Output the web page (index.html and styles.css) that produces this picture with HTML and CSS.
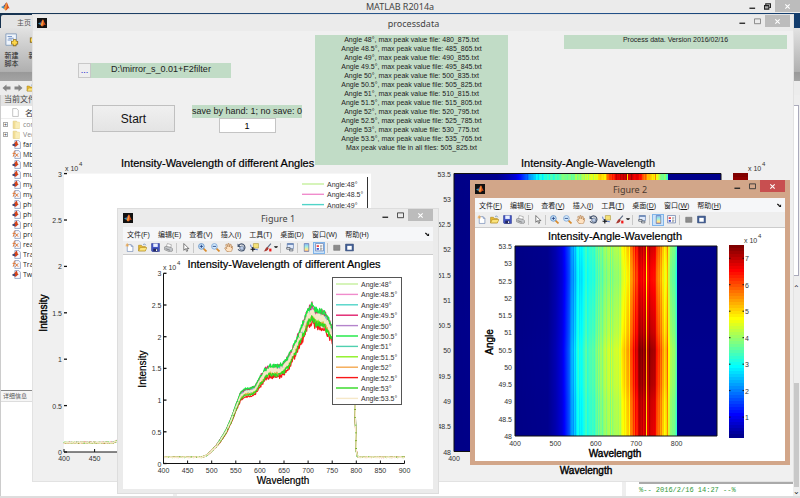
FILE: index.html
```html
<!DOCTYPE html>
<html lang="zh-CN">
<head>
<meta charset="utf-8">
<title>MATLAB R2014a</title>
<link rel="stylesheet" href="styles.css">
</head>
<body>
<svg class="defs" aria-hidden="true">
  <symbol id="logo" viewBox="0 0 16 16"><path d="M0 9l4-2 3 2-2 3z" fill="#3a8fb8"/><path d="M4 7c3-1 4-6 6-6L7 9z" fill="#5b4a7c"/><path d="M10 1c2 1 3 8 6 11-2-1-3-1-4 0-1 1-2 3-4 3-1-2-2-3-3-3 2-2 3-11 5-11z" fill="#d8501c"/><path d="M10 1c1 3 1 8-2 14-1-2-2-3-3-3 2-2 3-9 5-11z" fill="#f39a3c"/></symbol>
  <symbol id="new" viewBox="0 0 16 16"><path d="M4 3h7l3 3v9H4z" fill="#fff" stroke="#5672a8"/><path d="M11 3v3h3" fill="none" stroke="#5672a8"/><path d="M4 0v7M1 4h6M2 2l4 4M6 2L2 6" stroke="#f0a23c"/></symbol>
  <symbol id="open" viewBox="0 0 16 16"><path d="M1 4h5l1 2h6v8H1z" fill="#e8b92f" stroke="#a98318"/><path d="M4 8h12l-3 6H1z" fill="#fbe37c" stroke="#b08a1c"/><path d="M9 3c2-2 4-1 5 1" fill="none" stroke="#3465a4"/></symbol>
  <symbol id="save" viewBox="0 0 16 16"><path d="M1 1h14v14H2l-1-1z" fill="#4355c4" stroke="#27348c"/><path d="M4 1h8v6H4z" fill="#e9efff"/><path d="M4 10h8v5H4z" fill="#23285c"/><path d="M9 11h2v3H9z" fill="#fff"/></symbol>
  <symbol id="print" viewBox="0 0 16 16"><path d="M4 7l2-6 7 2-1 5z" fill="#fff" stroke="#888"/><path d="M1 7l3-1 9 2 2 2v4l-4 2-10-4z" fill="#c5c8cc" stroke="#777"/><path d="M3 10l8 3" stroke="#555"/></symbol>
  <symbol id="arrow" viewBox="0 0 16 16"><path d="M5 1v12l3-3 2 5 2-1-2-4h4z" fill="#fff" stroke="#222"/></symbol>
  <symbol id="zin" viewBox="0 0 16 16"><path d="M9 9l6 6" stroke="#d88b2c" stroke-width="3"/><circle cx="6" cy="6" r="5" fill="#d5ecff" stroke="#5b8cc4" stroke-width="1.5"/><path d="M6 3v6M3 6h6" stroke="#1c3e80" stroke-width="1.5"/></symbol>
  <symbol id="zout" viewBox="0 0 16 16"><path d="M9 9l6 6" stroke="#d88b2c" stroke-width="3"/><circle cx="6" cy="6" r="5" fill="#d5ecff" stroke="#7fa6d4" stroke-width="1.5"/><path d="M3 6h6" stroke="#1c3e80" stroke-width="1.5"/></symbol>
  <symbol id="hand" viewBox="0 0 16 16"><path d="M5 15L1 9l1-1 3 2-2-7 2-1 2 5V1h2l1 6 1-5 2 1v6l1-3 2 1-2 6-2 3z" fill="#ffe3c2" stroke="#a8713c"/></symbol>
  <symbol id="rotate" viewBox="0 0 16 16"><path d="M3 4c5-5 12-1 11 5-1 6-9 7-12 2" fill="none" stroke="#43536e" stroke-width="2"/><path d="M1 1v6h6z" fill="#43536e"/><path d="M5 7l4-2 3 2v4l-3 2-4-2z" fill="#b9cae6" stroke="#43536e"/></symbol>
  <symbol id="cursor" viewBox="0 0 16 16"><path d="M6 1h9v8H6z" fill="#f5e27a" stroke="#a88f2c"/><path d="M1 3c1 6 3 8 13 9" fill="none" stroke="#3b63c4" stroke-width="1.5"/><path d="M5 7v8M1 11h8" stroke="#111" stroke-width="2"/></symbol>
  <symbol id="brush" viewBox="0 0 16 16"><path d="M14 1L7 9" stroke="#5b6b84" stroke-width="2"/><path d="M8 7l2 2c-1 5-5 6-9 6 3-2 3-7 7-8z" fill="#a83a32"/><path d="M11 10h4v5h-4z" fill="#f01818"/></symbol>
  <symbol id="link" viewBox="0 0 16 16"><path d="M4 1h11v9H4z" fill="#dfeafc" stroke="#4b6ca4"/><path d="M4 2h11" stroke="#4b6ca4" stroke-width="2"/><path d="M3 8h6v3H3zM8 11h6v3H8z" fill="#fff" stroke="#5c6470" stroke-width="1.5"/></symbol>
  <symbol id="cbar" viewBox="0 0 16 16"><path d="M4 1h8v14H4z" fill="url(#rainbow)" stroke="#4660a0"/></symbol>
  <symbol id="legend" viewBox="0 0 16 16"><path d="M1 1h14v13H1z" fill="#fff" stroke="#3e5a94"/><path d="M3 4h4v3H3z" fill="#e33"/><path d="M3 9h4v3H3z" fill="#34c"/><path d="M9 5h4M9 7h3M9 10h4M9 12h3" stroke="#555"/></symbol>
  <symbol id="hide" viewBox="0 0 16 16"><path d="M3 4h11v9H3z" fill="#8c8c8c" stroke="#707070"/></symbol>
  <symbol id="dock" viewBox="0 0 16 16"><path d="M1 2h14v12H1z" fill="#3f5c94" stroke="#2d4370"/><path d="M4 5h8v7H4z" fill="#fff"/></symbol>
  <symbol id="mfile" viewBox="0 0 16 16"><path d="M5 1h7l3 3v11H5z" fill="#f4f7ff" stroke="#6478a8"/><path d="M0 9l4-3 4-5c2 3 2 7 4 8-3-1-4 3-6 3z" fill="#d3421c"/><path d="M0 9l4-3 2 3-2 2z" fill="#2c4c8c"/></symbol>
  <symbol id="fx" viewBox="0 0 16 16"><path d="M5 1h7l3 3v11H5z" fill="#f4f7ff" stroke="#6478a8"/><path d="M6 2C3 0 4 8 2 12M1 6h5M6 6l5 6M11 6l-5 6" fill="none" stroke="#e0702c" stroke-width="1.6"/></symbol>
  <symbol id="folder" viewBox="0 0 16 16"><path d="M2 2h6l1 2h4v11H2z" fill="#f2dd94" stroke="#dcc678"/><path d="M6 4h8v11H6z" fill="#f9edb8"/></symbol>
  <symbol id="script" viewBox="0 0 16 16"><path d="M1 1h12v13H1z" fill="#eef4fb" stroke="#8099b8"/><path d="M3 4h5M4 6h6M3 8h5" stroke="#6c8cc0"/><path d="M11 7v8M7 11h8" stroke="#8a6a1c" stroke-width="4"/><path d="M11 8v6M8 11h6" stroke="#ffd84a" stroke-width="2.5"/></symbol>
  <symbol id="plus" viewBox="0 0 16 16"><path d="M8 1v14M1 8h14" stroke="#8a6a1c" stroke-width="6"/><path d="M8 2v12M2 8h12" stroke="#ffdc58" stroke-width="4"/></symbol>
  <symbol id="back" viewBox="0 0 16 16"><path d="M0 8l8-7v4h8v6H8v4z" fill="#858585"/></symbol>
  <symbol id="fwd" viewBox="0 0 16 16"><path d="M16 8L8 1v4H0v6h8v4z" fill="#858585"/></symbol>
  <symbol id="doc" viewBox="0 0 16 16"><path d="M3 1h7l3 3v11H3z" fill="#fff" stroke="#999"/></symbol>
  <symbol id="min" viewBox="0 0 16 16"><path d="M1 12h13" stroke="#222" stroke-width="3"/></symbol>
  <symbol id="max" viewBox="0 0 16 16"><path d="M1 2h14v11H1z" fill="none" stroke="#333" stroke-width="2"/></symbol>
  <symbol id="restore" viewBox="0 0 16 16"><path d="M4 5V2h11v8h-3" fill="none" stroke="#222" stroke-width="2.5"/><path d="M1 6h10v8H1z" fill="#aaa" stroke="#222" stroke-width="2.5"/></symbol>
  <symbol id="close" viewBox="0 0 16 16"><path d="M3 3l10 10M13 3L3 13" stroke="#fff" stroke-width="2.5"/></symbol>
  <symbol id="undock" viewBox="0 0 16 16"><path d="M1 3l7 6" stroke="#111" stroke-width="4"/><path d="M13 4v9H5z" fill="#111"/></symbol>
  <linearGradient id="rainbow" x1="0" y1="0" x2="0" y2="1"><stop offset="0" stop-color="#8fb4f4"/><stop offset=".4" stop-color="#9ff0e4"/><stop offset=".75" stop-color="#ffe98a"/><stop offset="1" stop-color="#f4a07c"/></linearGradient>
</svg>

<div class="desktop">
  <main class="matlab">
    <header class="bar app-bar">
      <svg class="app-logo"><use href="#logo"/></svg>
      <h1 class="bar-title">MATLAB R2014a</h1>
      <div class="controls">
        <button aria-label="最小化"><svg><use href="#min"/></svg></button>
        <button aria-label="还原"><svg><use href="#restore"/></svg></button>
        <button class="close" aria-label="关闭"><svg><use href="#close"/></svg></button>
      </div>
    </header>
    <nav class="tabs"><button class="tab">主页</button></nav>
    <div class="strip">
      <button><svg><use href="#script"/></svg><span>新建<br>脚本</span></button>
      <button><svg><use href="#plus"/></svg><span>新建</span></button>
    </div>
    <div class="path">
      <svg><use href="#back"/></svg><svg><use href="#fwd"/></svg><svg><use href="#open"/></svg>
    </div>
    <div class="panes">
      <section class="side">
        <h2 class="pane-title">当前文件夹</h2>
        <div class="list-head"><svg><use href="#doc"/></svg>名称</div>
        <ul class="files">
          <li class="dir"><i>+</i><svg><use href="#folder"/></svg>con</li>
          <li class="dir"><i>+</i><svg><use href="#folder"/></svg>Vec</li>
          <li><svg><use href="#mfile"/></svg>fara</li>
          <li><svg><use href="#fx"/></svg>Mb</li>
          <li><svg><use href="#mfile"/></svg>Mb</li>
          <li><svg><use href="#mfile"/></svg>mul</li>
          <li><svg><use href="#mfile"/></svg>mya</li>
          <li><svg><use href="#fx"/></svg>mya</li>
          <li><svg><use href="#mfile"/></svg>pho</li>
          <li><svg><use href="#mfile"/></svg>pho</li>
          <li><svg><use href="#mfile"/></svg>pro</li>
          <li><svg><use href="#fx"/></svg>pro</li>
          <li><svg><use href="#fx"/></svg>rea</li>
          <li><svg><use href="#mfile"/></svg>Tra</li>
          <li><svg><use href="#fx"/></svg>Tra</li>
          <li><svg><use href="#mfile"/></svg>Two</li>
        </ul>
        <h2 class="detail-title">详细信息</h2>
        <div class="detail"></div>
      </section>
      <section class="command"></section>
      <section class="right">
        <div class="workspace"></div>
        <div class="history">
          <div class="history-text">
            <p class="selected">processdata</p>
            <p>%-- 2016/2/16 14:27 --%</p>
          </div>
          <div class="scroll"><span>⌃</span><b></b><span>⌄</span></div>
        </div>
      </section>
    </div>
  </main>

  <section class="window gui">
    <header class="bar">
      <span class="win-logo"><svg><use href="#logo"/></svg></span>
      <h2 class="bar-title">processdata</h2>
      <div class="controls">
        <button aria-label="最小化"><svg><use href="#min"/></svg></button>
        <button class="dim" aria-label="最大化"><svg><use href="#max"/></svg></button>
        <button class="close" aria-label="关闭"><svg><use href="#close"/></svg></button>
      </div>
    </header>
    <div class="gui-top">
      <div class="form">
        <div class="file-row"><button class="browse">...</button><p class="field">D:\mirror_s_0.01+F2filter</p></div>
        <div class="run-row">
          <button class="start">Start</button>
          <div class="save">
            <label class="field" for="save">save by hand: 1; no save: 0</label>
            <input id="save" value="1">
          </div>
        </div>
        <h3 class="plot-title">Intensity-Wavelength of different Angles</h3>
      </div>
      <div class="log">
        <p>Angle 48°, max peak value file: 480_875.txt</p>
        <p>Angle 48.5°, max peak value file: 485_865.txt</p>
        <p>Angle 49°, max peak value file: 490_855.txt</p>
        <p>Angle 49.5°, max peak value file: 495_845.txt</p>
        <p>Angle 50°, max peak value file: 500_835.txt</p>
        <p>Angle 50.5°, max peak value file: 505_825.txt</p>
        <p>Angle 51°, max peak value file: 510_815.txt</p>
        <p>Angle 51.5°, max peak value file: 515_805.txt</p>
        <p>Angle 52°, max peak value file: 520_795.txt</p>
        <p>Angle 52.5°, max peak value file: 525_785.txt</p>
        <p>Angle 53°, max peak value file: 530_775.txt</p>
        <p>Angle 53.5°, max peak value file: 535_765.txt</p>
        <p>Max peak value file in all files: 505_825.txt</p>
      </div>
      <div class="about">
        <p class="version">Process data. Version 2016/02/16</p>
        <h3 class="plot-title">Intensity-Angle-Wavelength</h3>
      </div>
    </div>
    <svg class="plot" id="plot-gui" viewBox="33 165 760 316"></svg>
  </section>

  <section class="window figure one">
    <header class="bar">
      <span class="win-logo"><svg><use href="#logo"/></svg></span>
      <h2 class="bar-title">Figure 1</h2>
      <div class="controls">
        <button aria-label="最小化"><svg><use href="#min"/></svg></button>
        <button aria-label="最大化"><svg><use href="#max"/></svg></button>
        <button class="close" aria-label="关闭"><svg><use href="#close"/></svg></button>
      </div>
    </header>
    <nav class="menu">
      <button>文件(F)</button><button>编辑(E)</button><button>查看(V)</button><button>插入(I)</button><button>工具(T)</button><button>桌面(D)</button><button>窗口(W)</button><button>帮助(H)</button>
      <svg class="undock"><use href="#undock"/></svg>
    </nav>
    <div class="tools">
      <button aria-label="新建"><svg><use href="#new"/></svg></button><button aria-label="打开"><svg><use href="#open"/></svg></button><button aria-label="保存"><svg><use href="#save"/></svg></button><button aria-label="打印"><svg><use href="#print"/></svg></button><hr>
      <button aria-label="选择"><svg><use href="#arrow"/></svg></button><hr>
      <button aria-label="放大"><svg><use href="#zin"/></svg></button><button aria-label="缩小"><svg><use href="#zout"/></svg></button><button aria-label="平移"><svg><use href="#hand"/></svg></button><button aria-label="旋转"><svg><use href="#rotate"/></svg></button><button aria-label="数据游标"><svg><use href="#cursor"/></svg></button><button aria-label="刷亮"><svg><use href="#brush"/></svg></button><span class="caret"></span><hr>
      <button aria-label="链接"><svg><use href="#link"/></svg></button><hr>
      <button aria-label="颜色栏"><svg><use href="#cbar"/></svg></button><button class="on" aria-label="图例"><svg><use href="#legend"/></svg></button><hr>
      <button aria-label="隐藏绘图工具"><svg><use href="#hide"/></svg></button><button aria-label="显示绘图工具"><svg><use href="#dock"/></svg></button>
    </div>
    <svg class="plot" id="plot-one" viewBox="123 255 310 234"></svg>
  </section>

  <section class="window figure two">
    <header class="bar">
      <span class="win-logo"><svg><use href="#logo"/></svg></span>
      <h2 class="bar-title">Figure 2</h2>
      <div class="controls">
        <button aria-label="最小化"><svg><use href="#min"/></svg></button>
        <button aria-label="最大化"><svg><use href="#max"/></svg></button>
        <button class="close" aria-label="关闭"><svg><use href="#close"/></svg></button>
      </div>
    </header>
    <nav class="menu">
      <button>文件(<u>F</u>)</button><button>编辑(<u>E</u>)</button><button>查看(<u>V</u>)</button><button>插入(<u>I</u>)</button><button>工具(<u>T</u>)</button><button>桌面(<u>D</u>)</button><button>窗口(<u>W</u>)</button><button>帮助(<u>H</u>)</button>
      <svg class="undock"><use href="#undock"/></svg>
    </nav>
    <div class="tools">
      <button aria-label="新建"><svg><use href="#new"/></svg></button><button aria-label="打开"><svg><use href="#open"/></svg></button><button aria-label="保存"><svg><use href="#save"/></svg></button><button aria-label="打印"><svg><use href="#print"/></svg></button><hr>
      <button aria-label="选择"><svg><use href="#arrow"/></svg></button><hr>
      <button aria-label="放大"><svg><use href="#zin"/></svg></button><button aria-label="缩小"><svg><use href="#zout"/></svg></button><button aria-label="平移"><svg><use href="#hand"/></svg></button><button aria-label="旋转"><svg><use href="#rotate"/></svg></button><button aria-label="数据游标"><svg><use href="#cursor"/></svg></button><button aria-label="刷亮"><svg><use href="#brush"/></svg></button><span class="caret"></span><hr>
      <button aria-label="链接"><svg><use href="#link"/></svg></button><hr>
      <button class="on" aria-label="颜色栏"><svg><use href="#cbar"/></svg></button><button aria-label="图例"><svg><use href="#legend"/></svg></button><hr>
      <button aria-label="隐藏绘图工具"><svg><use href="#hide"/></svg></button><button aria-label="显示绘图工具"><svg><use href="#dock"/></svg></button>
    </div>
    <svg class="plot" id="plot-two" viewBox="475 228 310 233"></svg>
  </section>
</div>
<script src="script.js"></script>
</body>
</html>
```

FILE: styles.css
```css
* { box-sizing: border-box; }
body, h1, h2, h3, p, ul, hr { margin: 0; padding: 0; font-weight: normal; }
body { font-family: "Liberation Sans", "Noto Sans CJK SC", sans-serif; font-size: 8px; color: #222; }
button { border: 0; padding: 0; margin: 0; background: none; font: inherit; color: inherit; }
ul { list-style: none; }
.defs { position: absolute; width: 0; height: 0; }

.desktop { position: relative; height: 100vh; overflow: hidden; background: #eee; }

/* title bars */
.bar { display: grid; grid-template-columns: 1fr auto 1fr; align-items: center; height: 16px; flex: none; }
.bar-title { font: 9px "Noto Sans", "Open Sans", sans-serif; color: #444; }
.controls { display: flex; justify-self: end; align-self: start; align-items: center; gap: 8px; }
.controls button { width: 7px; height: 12px; display: flex; align-items: center; justify-content: center; }
.controls svg { width: 7px; height: 7px; }
.controls .close { width: 25px; background: #bcbcbc; margin-left: -4px; }
.controls .dim { opacity: .6; }
.app-logo { width: 9px; height: 9px; margin-left: 1px; }
.win-logo { width: 10px; height: 10px; display: flex; align-items: center; justify-content: center; background: #111; }
.win-logo svg { width: 8px; height: 8px; }

/* main window */
.matlab { display: flex; flex-direction: column; height: 100%; }
.app-bar { height: 13px; background: #ebebeb; }
.tabs { height: 15px; flex: none; padding: 2px 0 0 1px; background: linear-gradient(90deg, #16324f, #2c5f9c 60%, #123c6c); }
.tab { width: 46px; height: 13px; background: #e4e4e4; color: #555; font-size: 7px; border-radius: 2px 0 0; }
.strip { display: flex; gap: 9px; height: 53px; flex: none; padding: 5px 4px; background: linear-gradient(#e2e2e2, #b0b0b0 82%, #999 84%, #a4a4a4); }
.strip button { display: flex; flex-direction: column; align-items: center; width: 15px; font-size: 7px; line-height: 8px; white-space: nowrap; }
.strip svg { width: 14px; height: 14px; margin-bottom: 5px; flex: none; }
.path { display: flex; align-items: center; gap: 3px; height: 14px; flex: none; padding-left: 2px; background: #ececec; }
.path svg { width: 9px; height: 8px; }
.panes { flex: 1; display: grid; grid-template-columns: 173px 1fr 174px; gap: 4px; min-height: 0; border-bottom: 2px solid #ddd; }
.side { display: flex; flex-direction: column; border-left: 1px solid #ccc; background: #fff; }
.pane-title { height: 11px; flex: none; padding-left: 3px; font-size: 8px; line-height: 10px; background: #e4e4e4; color: #444; }
.list-head { display: flex; align-items: center; gap: 5px; height: 13px; flex: none; padding-left: 10px; color: #333; border-bottom: 1px solid #eee; }
.list-head svg { width: 9px; height: 9px; }
.files { flex: 1; }
.files li { display: flex; align-items: center; gap: 2px; height: 10px; padding-left: 11px; font: 7px "Open Sans", sans-serif; }
.files svg { width: 9px; height: 9px; }
.files .dir { padding-left: 2px; color: #888; }
.files i { width: 5px; height: 5px; margin-right: 2px; border: 1px solid #aaa; font: 5px "Liberation Sans", sans-serif; line-height: 3px; text-align: center; color: #333; }
.detail-title { height: 12px; flex: none; padding-left: 2px; border-top: 1px solid #888; border-bottom: 1px solid #ddd; font-size: 6px; line-height: 11px; background: #f6f6f6; color: #555; }
.detail { height: 94px; flex: none; }
.command { background: #fff; }
.right { display: flex; flex-direction: column; gap: 8px; background: #eee; }
.workspace { height: 171px; flex: none; margin: 10px 1px 0 0; background: #fff; border: 1px solid #aab; }
.history { flex: 1; display: flex; background: #fff; }
.history-text { flex: 1; display: flex; flex-direction: column; justify-content: flex-end; font: 7px "Liberation Mono", monospace; line-height: 12px; color: #2f9a3a; padding-left: 13px; white-space: nowrap; }
.history-text .selected { height: 9px; line-height: 6px; background: #aaa; color: #444; }
.scroll { width: 7px; display: flex; flex-direction: column; align-items: center; background: #eee; line-height: 9px; }
.scroll span:first-child { flex: 1; }
.scroll b { width: 5px; height: 104px; background: #c8c8c8; }

/* windows lying on the desktop */
.window { position: absolute; display: flex; flex-direction: column; }
.plot { display: block; width: 100%; overflow: visible; }
.gui { left: 33px; right: 7px; top: 15px; background: #f0f0f0; box-shadow: 0 0 0 1px #e2e2e2; }
.gui .bar { padding: 0 3px 0 4px; background: #ebebeb; }
.gui-top { display: grid; grid-template-columns: 282px 193px 1fr; height: 134px; padding-top: 4px; }
.form { display: flex; flex-direction: column; align-items: flex-start; padding: 28px 0 0 45px; }
.file-row { display: flex; width: 153px; height: 15px; }
.browse { width: 13px; border: 1px solid #c8c8c8; background: #eee; color: #11c; font-size: 9px; line-height: 9px; }
.field { background: #c1dcc6; font-size: 9px; line-height: 12px; text-align: center; white-space: nowrap; }
.file-row .field { flex: 1; }
.run-row { display: flex; gap: 17px; padding-left: 14px; margin-top: 27px; }
.start { width: 83px; height: 27px; border: 1px solid #c0c0c0; background: linear-gradient(#f0f0f0, #e4e4e4); font-size: 12px; color: #111; }
.save { display: flex; flex-direction: column; align-items: center; width: 110px; }
.save .field { width: 100%; height: 13px; }
.save input { width: 57px; height: 15px; border: 1px solid #c4c4c4; padding: 0; text-align: center; background: #fff; font: 9px "Liberation Sans", sans-serif; }
.plot-title { margin-top: auto; margin-bottom: -4px; font-size: 11px; line-height: 12px; color: #000; -webkit-text-stroke: .2px #000; white-space: nowrap; }
.form .plot-title { padding-left: 43px; }
.log { height: 130px; background: #c1dcc6; font-size: 7px; line-height: 9px; text-align: center; }
.about { display: flex; flex-direction: column; padding: 0 6px 0 13px; }
.version { height: 14px; margin-left: 43px; background: #c1dcc6; font-size: 7px; line-height: 9px; text-align: center; }

.figure { width: 40%; padding: 0 5px 4px; background: #ebebeb; box-shadow: 0 0 0 1px #ddd; }
.figure .bar { height: 18px; }
.figure .plot { background: #fff; }
.one { left: 118px; top: 209px; }
.two { left: 470px; top: 180px; background: #d2a689; box-shadow: none; }
.two .close { background: #c84f50; }
.two .bar-title { color: #4a3a30; }
.menu { display: flex; align-items: center; gap: 8px; height: 14px; padding: 0 3px 0 4px; background: #f6f7f9; font-size: 7px; white-space: nowrap; }
.undock { width: 5px; height: 5px; margin-left: auto; }
.tools { display: flex; align-items: center; gap: 1px; height: 14px; background: #eee; border-bottom: 1px solid #ccc; }
.tools button { width: 12px; height: 12px; display: flex; align-items: center; justify-content: center; }
.tools svg { width: 9px; height: 9px; }
.tools .on { background: #cbe3fa; border: 1px solid #7fb4ea; }
.tools hr { width: 1px; height: 10px; margin: 0 1px; border: 0; background: #c8c8c8; }
.caret { border: 1px solid transparent; border-top: 2px solid #444; width: 4px; }
.two .tools { height: 16px; }

/* plot text */
.tick { font-size: 7px; fill: #333; }
.axis-label { font-size: 10px; fill: #000; stroke: #000; stroke-width: .2px; text-anchor: middle; }
.axis-label.bold { stroke-width: .4px; }
.title { font-size: 11px; fill: #000; stroke: #000; stroke-width: .2px; text-anchor: middle; }
.exp { font-size: 6px; fill: #333; }
.end { text-anchor: end; }
.mid { text-anchor: middle; }
```

FILE: script.js
```js
const NS = 'http://www.w3.org/2000/svg';
let seed = 7;
const rand = () => (seed = (seed * 16807) % 2147483647) / 2147483647;

function add(parent, tag, attrs, text) {
  const el = document.createElementNS(NS, tag);
  for (const k in attrs) el.setAttribute(k, attrs[k]);
  if (text !== undefined) el.textContent = text;
  parent.appendChild(el);
  return el;
}

function interp(points, x) {
  for (let i = 1; i < points.length; i++) {
    const [x0, y0] = points[i - 1], [x1, y1] = points[i];
    if (x <= x1) return y0 + (y1 - y0) * (x - x0) / (x1 - x0);
  }
  return points[points.length - 1][1];
}

function jet(t) {
  const c = d => Math.round(255 * Math.max(0, Math.min(1, 1.5 - Math.abs(4 * t - d))));
  return `rgb(${c(3)},${c(2)},${c(1)})`;
}

const spectrum = [[400, .1], [480, .1], [490, .13], [500, .2], [510, .28], [520, .39], [530, .51], [540, .68], [550, .88], [560, 1.07], [570, 1.13], [580, 1.135], [590, 1.17], [600, 1.3], [610, 1.42], [620, 1.47], [640, 1.47], [650, 1.52], [660, 1.62], [670, 1.77], [680, 1.95], [690, 2.12], [700, 2.33], [708, 2.4], [715, 2.31], [732, 2.29], [740, 2.2], [750, 2.05], [790, 1.6], [797, 1], [800, .2], [802, .12], [805, .1], [900, .1]];

const series = [
  ['48', '#c4f09c', .99], ['48.5', '#f08ccc', 1.03], ['49', '#50d4c8', 1.02], ['49.5', '#e0206c', 1.04],
  ['50', '#b484cc', 1], ['50.5', '#18e840', 1.045], ['51', '#50d0b0', .98], ['51.5', '#8cf020', .97],
  ['52', '#f4a850', .965], ['52.5', '#f81818', .935], ['53', '#30d820', .955], ['53.5', '#f6e8c8', 1]
];

function exponent(svg, x, y) {
  add(svg, 'text', { x, y, class: 'tick' }, 'x 10');
  add(svg, 'text', { x: x + 14, y: y - 5, class: 'exp' }, '4');
}

function lineAxes(svg, x0, y0, sx, sy, fullWidth) {
  const X = v => x0 + (v - 400) * sx, Y = v => y0 - v * sy;
  add(svg, 'rect', { x: x0, y: Y(3), width: 500 * sx + 1, height: 3 * sy, fill: '#fff' });
  for (const [name, color, k] of series) {
    let d = '';
    const last = name === '53.5';
    for (let v = 400; v <= 900; v += last ? .5 : 1) {
      const b = interp(spectrum, v);
      const spread = b < .3 ? .05 : (v > 600 ? .025 : .012);
      const f = b < .3 ? 1 : k;
      d += `${d ? 'L' : 'M'}${X(v).toFixed(1)} ${Y(b * (f + (rand() * 2 - 1) * spread)).toFixed(1)}`;
    }
    add(svg, 'path', { d, fill: 'none', stroke: color, 'stroke-width': last ? 1.5 : 1.2, 'stroke-dasharray': last ? '7 .8' : 'none', 'stroke-linejoin': 'round' });
  }
  if (fullWidth) add(svg, 'path', { d: `M${x0} ${Y(3)}V${y0}`, stroke: '#111' });
  add(svg, 'path', { d: `M${x0} ${y0}H${X(900)}`, stroke: '#111' });
  for (let v = 0; v <= 3; v += .5) {
    add(svg, 'path', { d: `M${x0} ${Y(v)}h3`, stroke: '#111', 'stroke-width': 1.3 });
    add(svg, 'text', { x: x0 - 2, y: Y(v) + 3, class: 'tick end' }, v);
  }
  for (let v = 400; v <= (fullWidth ? 900 : 450); v += 50) {
    add(svg, 'path', { d: `M${X(v)} ${y0}v-3`, stroke: '#111' });
    add(svg, 'text', { x: X(v), y: y0 + 9, class: 'tick mid' }, v);
  }
}

function legend(svg, x, y, step, rows) {
  rows.forEach(([name, color], i) => {
    add(svg, 'path', { d: `M${x} ${y + i * step}h22`, stroke: color, 'stroke-width': 1.4 });
    add(svg, 'text', { x: x + 25, y: y + i * step + 3, class: 'tick' }, `Angle:${name}°`);
  });
}

const heat = [[400, .3], [480, .35], [500, .6], [515, .9], [530, 1.6], [540, 2.1], [550, 2.75], [560, 3.05], [580, 3.3], [600, 3.65], [620, 3.95], [640, 4.15], [660, 4.5], [670, 4.8], [680, 5.3], [690, 5.9], [700, 6.7], [712, 7.1], [735, 7], [745, 6.6], [755, 5.9], [765, 5.3], [775, 4.8], [785, 4.2], [799, 3.6]];
const gain = [[48, .98], [49, 1], [49.5, 1.03], [50.5, 1.05], [51, 1.01], [52, .97], [52.6, .94], [53.1, .97], [53.5, 1]];

function heatmap(svg, id, x, y, w, h) {
  const defs = add(svg, 'defs', {});
  const n = Math.round(w);
  for (let i = 0; i < n; i++) {
    const nm = 400 + 500 * i / n;
    let base = nm > 800 ? .33 : interp(heat, nm);
    if (nm > 535 && nm < 800) base += (rand() * 2 - 1) * .27;
    if (Math.abs(nm - 724) < 1.3) base = 5.1;
    if (Math.abs(nm - 776) < 1.3) base = 5.7;
    if (Math.abs(nm - 682) < 1.3) base = 4.9;
    const g = add(defs, 'linearGradient', { id: `${id}${i}`, x1: 0, x2: 0, y1: 0, y2: 1 });
    for (let s = 0; s <= 22; s++) {
      const v = base * interp(gain, 53.5 - s * .25);
      add(g, 'stop', { offset: s / 22, 'stop-color': jet((v - .25) / 7.25) });
    }
    add(svg, 'rect', { x: x + i * w / n, y, width: i < n - 1 ? 2 : 1, height: h, fill: `url(#${id}${i})`, 'shape-rendering': 'crispEdges' });
  }
  add(svg, 'path', { d: `M${x} ${y}H${x + w}V${y + h}H${x}z`, fill: 'none', stroke: '#111' });
  for (let i = 0; i <= 11; i++) {
    const ty = y + h * i / 11;
    add(svg, 'text', { x: x - 3, y: ty + 3, class: 'tick end' }, 53.5 - i * .5);
  }
}

function colorbar(svg, x, y, w, h) {
  for (let i = 0; i < 64; i++) {
    add(svg, 'rect', { x, y: y + h * i / 64, width: w, height: h / 64 + .5, fill: jet(1 - i / 64), 'shape-rendering': 'crispEdges' });
  }
  for (let v = 1; v <= 7; v++) {
    const ty = y + h * (7.5 - v) / 7.25;
    add(svg, 'path', { d: `M${x} ${ty}h1.5M${x + w - 1.5} ${ty}h1.5`, stroke: '#111' });
    add(svg, 'text', { x: x + w + 1, y: ty + 3, class: 'tick' }, v);
  }
}

const gui = document.getElementById('plot-gui');
lineAxes(gui, 64, 452, .612, 92.8, false);
exponent(gui, 65, 171);
legend(gui, 302, 184, 10.3, series.slice(0, 3));
add(gui, 'path', { d: 'M367.5 177V300', stroke: '#333' });
add(gui, 'text', { transform: 'translate(47 313) rotate(-90)', class: 'axis-label bold' }, 'Intensity');
heatmap(gui, 'a', 454, 173.5, 267, 278);
colorbar(gui, 733, 173, 15, 279);
exponent(gui, 748, 171);
add(gui, 'text', { x: 454, y: 461, class: 'tick mid' }, '400');
add(gui, 'text', { x: 586, y: 474, class: 'axis-label bold' }, 'Wavelength');

const one = document.getElementById('plot-one');
lineAxes(one, 163.5, 463.5, .482, 63.4, true);
exponent(one, 163, 270);
add(one, 'text', { x: 284, y: 268, class: 'title' }, 'Intensity-Wavelength of different Angles');
add(one, 'text', { x: 283, y: 484, class: 'axis-label' }, 'Wavelength');
add(one, 'text', { transform: 'translate(146 369) rotate(-90)', class: 'axis-label' }, 'Intensity');
add(one, 'rect', { x: 332.5, y: 277.5, width: 69, height: 127, fill: '#fff', stroke: '#555' });
legend(one, 336, 284, 10.4, series);

const two = document.getElementById('plot-two');
heatmap(two, 'b', 515, 246, 202, 190);
colorbar(two, 729, 245, 15, 192);
exponent(two, 744, 243);
for (let v = 400; v <= 800; v += 100) {
  add(two, 'text', { x: 515 + (v - 400) * .404, y: 446, class: 'tick mid' }, v);
}
add(two, 'text', { x: 615, y: 240, class: 'title' }, 'Intensity-Angle-Wavelength');
add(two, 'text', { x: 615, y: 457, class: 'axis-label bold' }, 'Wavelength');
add(two, 'text', { transform: 'translate(493 342) rotate(-90)', class: 'axis-label bold' }, 'Angle');
```
